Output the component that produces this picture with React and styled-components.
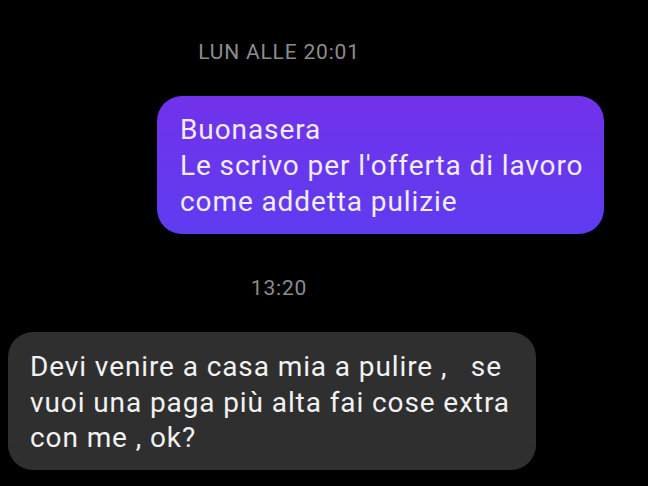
import React from 'react';
import styled, { createGlobalStyle } from 'styled-components';

const Global = createGlobalStyle`
  html, body {
    margin: 0;
    padding: 0;
    background: #000;
  }
  body {
    font-family: Roboto, "Noto Sans", "Liberation Sans", sans-serif;
  }
`;

const App = () => (
  <>
    <Global />
    <Thread>
      <Stamp>LUN ALLE 20:01</Stamp>
      <Row $mine>
        <Bubble $mine>
          Buonasera
          <br />
          Le scrivo per l'offerta di lavoro
          <br />
          come addetta pulizie
        </Bubble>
      </Row>
      <Stamp $gap={40}>13:20</Stamp>
      <Row>
        <Bubble>
          Devi venire a casa mia a pulire ,&nbsp;&nbsp; se
          <br />
          vuoi una paga più alta fai cose extra
          <br />
          con me , ok?
        </Bubble>
      </Row>
    </Thread>
  </>
);

export default App;

const Thread = styled.main`
  width: 648px;
  height: 486px;
  overflow: hidden;
  display: flex;
  flex-direction: column;
  padding-top: 38px;
  box-sizing: border-box;
`;

const Stamp = styled.div`
  width: 558px;
  text-align: center;
  color: #8c8c8c;
  font-size: 21px;
  line-height: 28px;
  letter-spacing: 0.8px;
  margin-top: ${({ $gap }) => ($gap ? `${$gap}px` : '0')};
`;

const Row = styled.div`
  display: flex;
  justify-content: ${({ $mine }) => ($mine ? 'flex-end' : 'flex-start')};
  padding: ${({ $mine }) => ($mine ? '30px 44px 0 0' : '30px 0 0 8px')};
`;

const Bubble = styled.div`
  box-sizing: border-box;
  width: ${({ $mine }) => ($mine ? '447px' : '528px')};
  padding: ${({ $mine }) => ($mine ? '16px 16px 14px 23px' : '17px 16px 14px 22px')};
  border-radius: 25px;
  font-size: 28px;
  line-height: ${({ $mine }) => ($mine ? '36px' : '35.5px')};
  letter-spacing: 0.9px;
  color: ${({ $mine }) => ($mine ? '#f3ecff' : '#f2f2f2')};
  background: ${({ $mine }) =>
    $mine ? 'linear-gradient(180deg, #7132ea 0%, #5e3cf0 100%)' : '#2f2f2f'};
`;
